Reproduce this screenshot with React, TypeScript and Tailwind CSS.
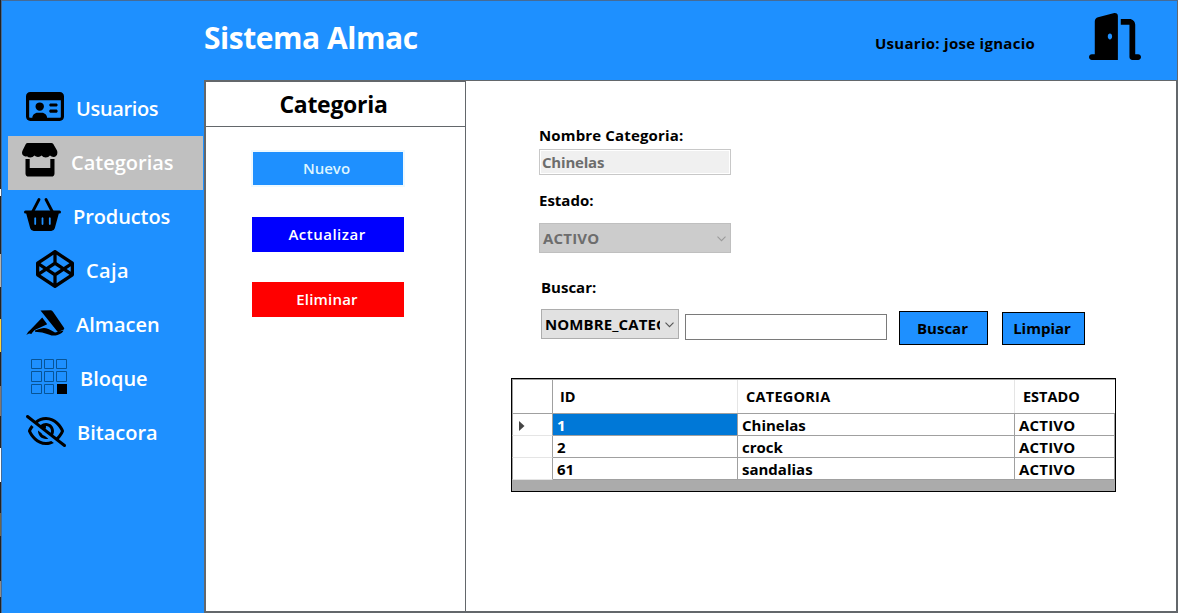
import React from "react";
import { FaCodepen, FaDoorOpen, FaRegEyeSlash, FaRegIdCard } from "react-icons/fa6";

const StoreIcon = () => (
  <svg viewBox="0 0 36 34" className="h-[34px] w-9 shrink-0">
    <path d="M5.6 0H29.4Q30.6 0 31.3 1L35 7.6C36.2 11 34.5 14 31.5 14Q29.4 14 28 12.6Q26.5 14.5 23.8 14.5Q21 14.5 19.6 12.6Q18.3 14 16 14Q13.8 14 12.4 12.6Q10.8 14.5 8.3 14.5Q6.3 14.5 5 13.2C1.4 14.5-1.2 11 .6 7.6L3.7 1.2Q4.4 0 5.6 0Z" />
    <path d="M3.5 16H7.7V25H28.3V16H32.5V30.5Q32.5 33.6 29.4 33.6H6.6Q3.5 33.6 3.5 30.5Z" />
  </svg>
);

const BasketIcon = () => (
  <svg viewBox="0 0 37 34" className="h-[34px] w-[37px] shrink-0">
    <path d="M15 1.5L8.5 14M22 1.5L28.5 14" fill="none" stroke="#000" strokeWidth="2.8" strokeLinecap="round" />
    <path fillRule="evenodd" d="M1.5 12.5H35.5Q37 12.5 37 14T35.5 15.5H34.8L30.8 30.3Q30 33 27.3 33H9.7Q7 33 6.2 30.3L2.2 15.5H1.5Q0 15.5 0 14T1.5 12.5ZM10.3 20V26.2Q11.2 27.6 12.1 26.2V20Q11.2 18.5 10.3 20ZM17.6 20V26.2Q18.5 27.6 19.4 26.2V20Q18.5 18.5 17.6 20ZM24.9 20V26.2Q25.8 27.6 26.7 26.2V20Q25.8 18.5 24.9 20Z" />
  </svg>
);

const WarehouseIcon = () => (
  <svg viewBox="0 0 39 26" className="h-[26px] w-[39px] shrink-0">
    <path d="M14.5 0.5L25 .2Q26 .3 27 1.8L37.8 17.5Q39 19.3 36.8 20L31.8 21.9ZM16.2 7.5L21.2 14.2L12.5 18.2Q7.5 20 5.3 24Q2.5 22.8.3 25.3Q1.2 22 4.7 19.5ZM9 20.6Q15 17.9 18 18Q21 17.8 29 22.4L37.5 20.5Q36.8 23.1 31.5 24.9Q27.2 26.3 23.5 24.7Q16 22 9 21.8Z" />
  </svg>
);

const GridIcon = () => (
  <svg viewBox="0 0 37 36" className="h-9 w-[37px] shrink-0">
    <g fill="none" stroke="#075496">
      <path d="M.5.5h10v9H.5zM13.5.5h9v9h-9zM25.5.5h10v9h-10zM.5 12.5h10v10H.5zM13.5 12.5h9v10h-9zM25.5 12.5h10v10h-10zM.5 25.5h10v9H.5zM13.5 25.5h9v9h-9z" />
    </g>
    <path d="M26 25h10v10H26z" />
  </svg>
);

const Chevron = ({ className }: { className: string }) => (
  <svg viewBox="0 0 9 6" className={className} fill="none" strokeWidth="1.1">
    <path d="M.5.7L4.5 4.7L8.5.7" />
  </svg>
);

type NavItem = { label: string; icon: React.ReactNode; row: string; text: string };

const nav: NavItem[] = [
  { label: "Usuarios", icon: <FaRegIdCard preserveAspectRatio="none" className="h-[33px] w-[38px] shrink-0 -translate-y-[3px]" />, row: "pl-[18px] gap-3", text: "tracking-[-0.35px]" },
  { label: "Categorias", icon: <StoreIcon />, row: "bg-[#c0c0c0] pl-[14px] gap-[13px] pb-[6px]", text: "pt-[6px]" },
  { label: "Productos", icon: <div className="-translate-y-[2px]"><BasketIcon /></div>, row: "pl-4 gap-[12px]", text: "tracking-[-0.1px]" },
  { label: "Caja", icon: <FaCodepen className="size-[38px] shrink-0 -translate-y-[2px]" />, row: "pl-7 gap-3", text: "tracking-[0.4px]" },
  { label: "Almacen", icon: <div className="-translate-y-[2px]"><WarehouseIcon /></div>, row: "pl-[18px] gap-[11px]", text: "" },
  { label: "Bloque", icon: <div className="-translate-y-[2px]"><GridIcon /></div>, row: "pl-[23px] gap-3", text: "" },
  { label: "Bitacora", icon: <FaRegEyeSlash className="h-8 w-10 shrink-0 -translate-y-[2px]" />, row: "pl-[18px] gap-[11px]", text: "" },
];

const rows = [
  ["1", "Chinelas", "ACTIVO"],
  ["2", "crock", "ACTIVO"],
  ["61", "sandalias", "ACTIVO"],
];

export default function App() {
  return (
    <div className="flex h-[613px] w-[1178px] overflow-hidden bg-[#1e90ff] font-['Open_Sans','Noto_Sans',sans-serif] text-[15px] leading-5 font-bold text-black">
      <div className="flex w-px shrink-0 flex-col bg-[#222]">
        <div className="mt-[189px] h-[7px] bg-white" />
        <div className="mt-[58px] h-[33px] bg-[#b8b4ad]" />
        <div className="mt-8 h-[33px] bg-[#ffd43b]" />
        <div className="mt-[34px] h-[30px] bg-[#82776f]" />
        <div className="mt-[32px] h-[34px] bg-white" />
        <div className="mt-[31px] h-[23px] bg-[#6c654c]" />
        <div className="mt-[45px] h-4 bg-[#908b86]" />
      </div>
      <div className="flex flex-1 flex-col border-t border-l border-[#466b96]">
        <header className="flex h-[79px] shrink-0 border-r border-[#63676b]">
          <h1 className="w-[871px] pt-[18px] pl-[202px] text-[30px] leading-[38px] font-bold tracking-[-0.45px] whitespace-nowrap text-white">Sistema Almac</h1>
          <div className="w-[216px] pt-[32px] pl-[2px] tracking-[0.28px] whitespace-nowrap">Usuario: jose ignacio</div>
          <FaDoorOpen preserveAspectRatio="none" className="mt-3 h-[47px] w-[52px]" />
        </header>
        <div className="flex min-h-0 flex-1">
          <aside className="w-[202px] shrink-0 pt-[2px] pl-[6px] text-[20px] leading-[26px] font-semibold text-white">
            {nav.map((n) => (
              <div key={n.label} className={"flex h-[54px] w-[195px] items-center " + n.row}>
                <div className="fill-black text-black">{n.icon}</div>
                <span className={n.text}>{n.label}</span>
              </div>
            ))}
          </aside>
          <main className="flex flex-1 border-2 border-t border-[#63676b] bg-white">
            <section className="flex w-[260px] shrink-0 flex-col border-t border-r border-[#63676b]">
              <h2 className="flex h-[45px] shrink-0 items-center justify-center border-b border-[#63676b] pr-1 pb-px text-[23px] font-bold tracking-[-0.3px]">Categoria</h2>
              <div className="flex flex-col pt-[25px] pl-[46px] font-semibold text-white">
                <button className="ml-px h-[33px] w-[150px] bg-[#1e90ff] pr-[3px] pb-[2px] text-[#dcf5ff] outline-2 outline-[#eef9ff]">Nuevo</button>
                <button className="mt-8 h-[35px] w-[152px] bg-[#0000ff] pr-[2px] pb-[2px] tracking-[0.5px]">Actualizar</button>
                <button className="mt-[30px] h-[35px] w-[152px] bg-[#ff0000] pr-[2px] pb-[2px] tracking-[0.2px]">Eliminar</button>
              </div>
            </section>
            <section className="flex flex-col pl-[45px]">
              <div className="flex flex-col pt-[44px] pl-[28px]">
                <label className="tracking-[0.15px]">Nombre Categoria:</label>
                <div className="mt-1 h-[26px] w-[192px] border border-[#c8c8c8] bg-[#f0f0f0] pt-[2px] pl-[2px] tracking-[-0.2px] text-[#6d6d6d] shadow-[inset_0_0_0_1px_white]">Chinelas</div>
                <label className="mt-[15px]">Estado:</label>
                <div className="mt-[13px] flex h-[30px] w-[192px] items-center justify-between border border-[#bfbfbf] bg-[#ccc] pr-1 pl-[3px] tracking-[0.2px] text-[#6d6d6d]">ACTIVO<Chevron className="mt-[2px] h-[6px] w-[9px] stroke-[#9b9b9b]" /></div>
                <label className="mt-[24px] ml-[2px]">Buscar:</label>
              </div>
              <div className="mt-3 flex h-[36px] items-start pl-[30px]">
                <div className="flex h-[30px] w-[138px] items-center justify-between border border-[#adadad] bg-[#e1e1e1] pr-1 pl-[3px]"><span className="w-[115px] overflow-hidden whitespace-nowrap tracking-[0.1px]">NOMBRE_CATEGORIA</span><Chevron className="mt-[2px] h-[6px] w-[9px] stroke-[#555]" /></div>
                <input className="mt-[5px] ml-[6px] h-[26px] w-[202px] border border-[#7a7a7a] bg-white px-1 outline-none" />
                <button className="mt-[2px] ml-3 h-[34px] w-[89px] border border-black bg-[#1e90ff] pr-[2px]">Buscar</button>
                <button className="mt-[3px] ml-[14px] h-[33px] w-[83px] border border-black bg-[#1e90ff] pr-[3px] pb-[2px]">Limpiar</button>
              </div>
              <div className="mt-[33px] h-[114px] w-[605px] border border-black bg-[#ababab]">
                <div className="grid h-[35px] grid-cols-[41px_185px_277px_100px] border-t border-b border-[#a0a0a0] bg-white text-[14.5px] leading-[33px]">
                  <div className="border-r border-l border-[#a0a0a0]" />
                  <div className="border-r border-[#e5e5e5] pl-[7px]">ID</div>
                  <div className="border-r border-[#e5e5e5] pl-2 tracking-[0.25px]">CATEGORIA</div>
                  <div className="pl-2">ESTADO</div>
                </div>
                {rows.map((r, i) => (
                  <div key={r[0]} className="grid h-[22px] grid-cols-[41px_185px_277px_100px] bg-white pt-px leading-5">
                    <div className="-mt-px flex items-center border-r border-b border-l border-r-[#a0a0a0] border-b-[#e5e5e5] border-l-[#a0a0a0] pl-[6px]">
                      {i === 0 && <svg viewBox="0 0 6 10" className="mt-[2px] h-[10px] w-[6px] fill-[#444]"><path d="M0 0L5.5 5L0 10z" /></svg>}
                    </div>
                    <div className={i === 0 ? "-mt-px border-r border-b border-[#a0a0a0] bg-[#0078d7] pt-px pl-1 text-white" : "-mt-px border-r border-b border-[#a0a0a0] pt-px pl-1"}>{r[0]}</div>
                    <div className="-mt-px border-r border-b border-[#a0a0a0] pt-px pl-1">{r[1]}</div>
                    <div className="-mt-px border-r border-b border-[#a0a0a0] pt-px pl-1 tracking-[0.2px]">{r[2]}</div>
                  </div>
                ))}
              </div>
            </section>
          </main>
        </div>
      </div>
    </div>
  );
}
